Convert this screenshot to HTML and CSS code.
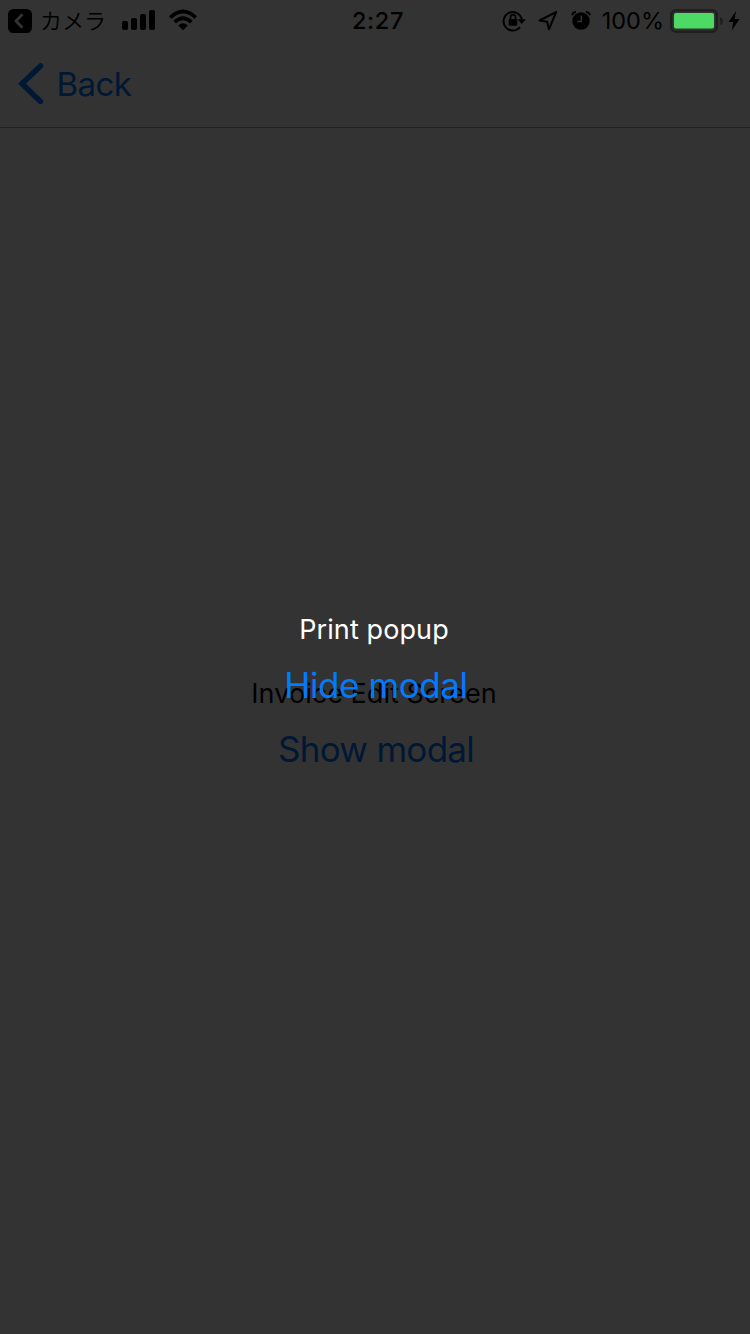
FILE: index.html
```html
<!DOCTYPE html>
<html lang="en">
<head>
<meta charset="utf-8">
<title>Invoice Edit Screen</title>
<link rel="stylesheet" href="styles.css">
</head>
<body>
<div class="screen">
  <header class="navbar">
    <a class="back">
      <svg class="chevron" width="26" height="42" viewBox="0 0 26 42"><path d="M22.500 3 4 20.700l18.500 17.700" fill="none" stroke="currentColor" stroke-width="5.500" stroke-linecap="round" stroke-linejoin="miter"/></svg>
      <span class="back-label">Back</span>
    </a>
  </header>
  <main class="content">
    <div class="caption invoice">Invoice Edit Screen</div>
    <div class="button show">Show modal</div>
  </main>
</div>
<div class="modal">
  <div class="caption popup">Print popup</div>
  <div class="button hide">Hide modal</div>
</div>
<div class="statusbar">
  <div class="status-left">
    <svg class="return" width="24" height="24" viewBox="0 0 24 24"><rect width="24" height="24" rx="5.500" fill="#000"/><path d="M14.500 5.300 8 12l6.500 6.700" fill="none" stroke="#333" stroke-width="2.800"/></svg>
    <span class="app">カメラ</span>
    <svg class="signal" width="34" height="20" viewBox="0 0 34 20"><rect x="0" y="11" width="6" height="9" rx="2"/><rect x="9" y="8" width="6" height="12" rx="2"/><rect x="18" y="4" width="6" height="16" rx="2"/><rect x="27" y="0" width="6" height="20" rx="2"/></svg>
    <svg class="wifi" width="30" height="22" viewBox="0 0 30 22"><path d="M2.300 8.500Q15-3.500 27.700 8.500M6.700 13.200Q15 5.300 23.300 13.200" fill="none" stroke="#000" stroke-width="3.700"/><path d="M10.200 16.400Q15 12.200 19.800 16.400L15 21.200Z"/></svg>
  </div>
  <div class="time">2:27</div>
  <div class="status-right">
    <svg class="lock" width="24" height="22" viewBox="0 0 24 22"><path d="M19.800 9.500A9.200 9.200 0 1 0 18 17" fill="none" stroke="#000" stroke-width="2"/><path d="M15.500 9.300h8.500l-4.200 4.700z"/><rect x="6.700" y="9" width="8.600" height="6.700" rx="1"/><path d="M8.500 10V7.200a2.500 2.500 0 0 1 5 0V10" fill="none" stroke="#000" stroke-width="1.700"/></svg>
    <svg class="arrow" width="20" height="22" viewBox="0 0 20 22"><path d="M18.200 2 1.500 10.500l7.700 1.300 1.700 7.500z" fill="none" stroke="#000" stroke-width="2" stroke-linejoin="round"/></svg>
    <svg class="alarm" width="20" height="20" viewBox="0 0 20 20"><circle cx="10" cy="10" r="8.700"/><path d="M.9 4.100Q1.800 1.300 5 .8M19.100 4.100Q18.200 1.300 15 .8" fill="none" stroke="#000" stroke-width="2"/><path d="M10.300 4.600v5.900H6.200" fill="none" stroke="#333" stroke-width="1.500"/></svg>
    <span class="percent">100%</span>
    <svg class="battery" width="53" height="24" viewBox="0 0 53 24"><rect x="1.200" y="1.200" width="45.600" height="21.600" rx="5" fill="none" stroke="#1f1f1f" stroke-width="2.400"/><rect x="4" y="4" width="40" height="15.500" rx="2" fill="#4cd964"/><path d="M50 8q3 1 3 4t-3 4z" fill="#1f1f1f"/></svg>
    <svg class="bolt" width="12" height="20" viewBox="0 0 12 20"><path d="M8 0 .6 11h4.700L3.800 19.500 11.500 8H6.700z"/></svg>
  </div>
</div>
</body>
</html>
```
FILE: styles.css
```css
* { box-sizing: border-box; }
body {
  margin: 0;
  width: 750px;
  height: 1334px;
  position: relative;
  overflow: hidden;
  background: #fff;
  font-family: Inter, "Noto Sans CJK JP", sans-serif;
}
svg { display: block; flex: none; }
.screen { display: flex; flex-direction: column; height: 100%; }
.navbar {
  height: 128px;
  padding: 40px 0 0 18px;
  border-bottom: 1px solid #a7a7aa;
}
.back { display: flex; align-items: center; height: 88px; color: #007aff; }
.back-label { margin-left: 12.5px; font-size: 33px; letter-spacing: -0.6px; }
.content {
  flex: 1;
  display: flex;
  flex-direction: column;
  align-items: center;
  justify-content: center;
  padding-top: 2px;
}
.caption { height: 34px; line-height: 34px; font-size: 27px; white-space: nowrap; padding-right: 2px; }
.button { height: 76px; line-height: 76px; font-size: 35px; color: #007aff; white-space: nowrap; padding-left: 2px; }
.invoice { letter-spacing: 0.04px; }
.show { letter-spacing: -0.7px; }
.modal {
  position: absolute;
  inset: 0;
  display: flex;
  flex-direction: column;
  align-items: center;
  justify-content: center;
  padding-top: 2px;
  background: rgba(0, 0, 0, 0.8);
}
.popup { color: #fff; letter-spacing: 0.1px; }
.hide { letter-spacing: -0.4px; }
.statusbar {
  position: absolute;
  inset: 0 0 auto;
  height: 42px;
  display: grid;
  grid-template-columns: 1fr auto 1fr;
  align-items: center;
  color: #000;
}
.status-left, .status-right { display: flex; align-items: center; height: 42px; }
.status-left { padding-left: 8px; }
.status-right { justify-content: flex-end; padding-right: 10px; }
.app { margin-left: 8px; font-family: "Noto Sans CJK JP", sans-serif; font-size: 22px; font-weight: 350; line-height: 38px; padding-bottom: 4px; }
.signal { margin: 0 0 2px 16px; }
.wifi { margin: 0 0 2px 12px; }
.time { font-size: 23.5px; font-weight: 550; line-height: 40px; padding-left: 6px; letter-spacing: 0.6px; }
.lock { margin-bottom: 1px; }
.arrow { margin-left: 12px; }
.alarm { margin-left: 13px; }
.percent { margin-left: 11px; font-size: 23.5px; line-height: 40px; }
.battery { margin-left: 6px; }
.bolt { margin: 0 0 1px 5px; }
```
